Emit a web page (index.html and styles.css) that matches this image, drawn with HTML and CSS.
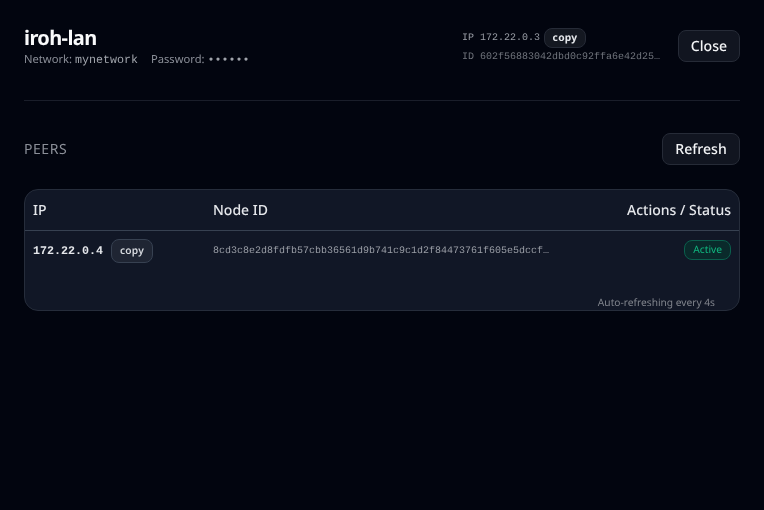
FILE: index.html
```html
<!DOCTYPE html>
<html lang="en">
<head>
<meta charset="utf-8">
<title>iroh-lan</title>
<link rel="stylesheet" href="styles.css">
</head>
<body>
<main class="page">
  <header class="top">
    <div class="brand">
      <h1 class="title">iroh-lan</h1>
      <div class="meta">
        <span class="meta-item">Network: <span class="mono">mynetwork</span></span>
        <span class="meta-item">Password: <span class="mono">••••••</span></span>
      </div>
    </div>
    <div class="top-right">
      <div class="self">
        <div class="self-ip"><span class="mono-ip">IP 172.22.0.3</span><button class="copy copy-top">copy</button></div>
        <div class="self-id">ID 602f56883042dbd0c92ffa6e42d25f0c9a7b1e34d2</div>
      </div>
      <button class="btn btn-close">Close</button>
    </div>
  </header>
  <section class="peers-head">
    <h2 class="peers-title">PEERS</h2>
    <button class="btn btn-refresh">Refresh</button>
  </section>
  <section class="card">
    <div class="grid head-row">
      <div>IP</div>
      <div>Node ID</div>
      <div class="right">Actions / Status</div>
    </div>
    <div class="grid peer-row">
      <div class="peer-ip"><span class="ip">172.22.0.4</span><button class="copy">copy</button></div>
      <div class="node-id">8cd3c8e2d8fdfb57cbb36561d9b741c9c1d2f84473761f605e5dccf7a1b2c3d4e5f60718</div>
      <div class="right status"><span class="badge">Active</span></div>
    </div>
    <div class="foot">Auto-refreshing every 4s</div>
  </section>
</main>
</body>
</html>
```
FILE: styles.css
```css
* { box-sizing: border-box; }
html, body { margin: 0; height: 100%; }
body {
  background: #02050f;
  color: #f3f4f6;
  font-family: "Noto Sans", sans-serif;
  text-rendering: geometricPrecision;
}
button { text-rendering: geometricPrecision; }
.page { padding: 24px 24px 0; will-change: transform; }
.top {
  display: flex;
  justify-content: space-between;
  align-items: flex-start;
  height: 77px;
  border-bottom: 1px solid #1a1e2a;
}
.title {
  margin: 0;
  font-size: 20px;
  line-height: 28px;
  font-weight: 700;
  letter-spacing: -0.6px;
  color: #f9fafb;
}
.meta {
  display: flex;
  gap: 13px;
  font-size: 11.2px;
  line-height: 16px;
  color: #8b8f98;
}
.mono { font-family: "Liberation Mono", monospace; font-size: 11.68px; color: #a0a4ab; }
.top-right { display: flex; gap: 16px; align-items: flex-start; }
.self {
  width: 200px;
  font-family: "Liberation Mono", monospace;
  font-size: 10px;
  color: #9a9ea6;
}
.self-ip { display: flex; align-items: center; gap: 4px; height: 20px; margin-top: 4px; }
.self-id {
  margin-top: 4px;
  line-height: 12px;
  color: #70747c;
  white-space: nowrap;
  overflow: hidden;
  text-overflow: ellipsis;
}
.copy {
  font-family: "Noto Sans", sans-serif;
  font-size: 10.24px;
  font-weight: 600;
  letter-spacing: 0.25px;
  line-height: 14px;
  height: 24px;
  width: 42px;
  padding: 0;
  color: #d6d9de;
  background: #1f2533;
  border: 1px solid #374151;
  border-radius: 8px;
}
.copy-top { height: 20px; font-weight: 700; color: #e5e7eb; background: #141821; border-color: #262b37; }
.btn {
  font-family: "Noto Sans", sans-serif;
  font-size: 14.08px;
  font-weight: 500;
  height: 32px;
  padding: 0;
  color: #f3f4f6;
  background: #111520;
  border: 1px solid #262b37;
  border-radius: 8px;
}
.btn-close { width: 62px; margin-top: 6px; }
.btn-refresh { width: 78px; }
.peers-head {
  display: flex;
  justify-content: space-between;
  align-items: center;
  margin-top: 32px;
  height: 32px;
}
.peers-title {
  margin: 0;
  font-size: 14px;
  font-weight: 400;
  letter-spacing: 0.55px;
  color: #8b8f98;
}
.card {
  margin-top: 24px;
  height: 122px;
  background: #111726;
  border: 1px solid #262d3b;
  border-radius: 14px;
  position: relative;
  overflow: hidden;
}
.grid {
  display: grid;
  grid-template-columns: 180px 1fr auto;
  padding: 0 8px;
  align-items: center;
}
.right { justify-self: end; text-align: right; }
.status { display: flex; margin-bottom: 2px; }
.head-row {
  height: 41px;
  font-size: 14px;
  font-weight: 500;
  color: #e5e7eb;
  border-bottom: 1px solid #374151;
}
.peer-row { height: 38px; padding-top: 2px; }
.peer-ip { display: flex; align-items: center; gap: 8px; }
.ip {
  font-family: "Liberation Mono", monospace;
  font-size: 11.68px;
  font-weight: 700;
  color: #e5e7eb;
}
.node-id {
  width: 337px;
  font-family: "Liberation Mono", monospace;
  font-size: 10px;
  color: #9a9ea6;
  white-space: nowrap;
  overflow: hidden;
  text-overflow: ellipsis;
}
.badge {
  display: block;
  height: 20px;
  padding: 0 8px;
  font-size: 10.24px;
  line-height: 18px;
  color: #10b981;
  background: #0a2a2b;
  border: 1px solid #0b5f4d;
  border-radius: 8px;
}
.foot {
  position: absolute;
  right: 24px;
  bottom: 1px;
  font-size: 10.2px;
  line-height: 14px;
  color: #80848c;
}
```
